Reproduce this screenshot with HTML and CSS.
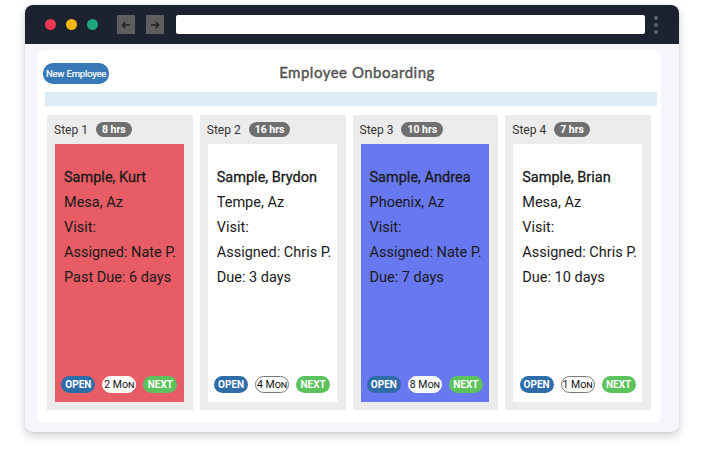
FILE: index.html
```html
<!DOCTYPE html>
<html>
<head>
<meta charset="utf-8">
<link rel="stylesheet" href="styles.css">
</head>
<body>
<div class="window">
  <div class="chrome">
    <div class="dots">
      <span class="dot red"></span>
      <span class="dot yellow"></span>
      <span class="dot green"></span>
    </div>
    <div class="navs">
      <span class="nav"><svg width="12" height="12" viewBox="0 0 12 12"><path d="M10 6H2.5M5.5 2.8L2.3 6l3.2 3.2" fill="none" stroke="#222" stroke-width="1.4"/></svg></span>
      <span class="nav"><svg width="12" height="12" viewBox="0 0 12 12"><path d="M2 6h7.5M6.5 2.8L9.7 6 6.5 9.2" fill="none" stroke="#222" stroke-width="1.4"/></svg></span>
    </div>
    <div class="url"></div>
    <div class="menu"><span></span><span></span><span></span></div>
  </div>
  <div class="body">
    <div class="panel">
      <div class="header">
        <button class="new-btn">New Employee</button>
        <h1 class="title">Employee Onboarding</h1>
        <span></span>
      </div>
      <div class="bar"></div>
      <div class="board">
        <section class="column">
          <div class="step"><span>Step 1</span><span class="hrs">8 hrs</span></div>
          <div class="card card-red">
            <div class="lines">
              <p class="name">Sample, Kurt</p>
              <p>Mesa, Az</p>
              <p>Visit:</p>
              <p>Assigned: Nate P.</p>
              <p>Past Due: 6 days</p>
            </div>
            <div class="actions">
              <span class="pill open">OPEN</span>
              <span class="pill mon">2 Mon</span>
              <span class="pill next">NEXT</span>
            </div>
          </div>
        </section>
        <section class="column">
          <div class="step"><span>Step 2</span><span class="hrs">16 hrs</span></div>
          <div class="card card-white">
            <div class="lines">
              <p class="name">Sample, Brydon</p>
              <p>Tempe, Az</p>
              <p>Visit:</p>
              <p>Assigned: Chris P.</p>
              <p>Due: 3 days</p>
            </div>
            <div class="actions">
              <span class="pill open">OPEN</span>
              <span class="pill mon">4 Mon</span>
              <span class="pill next">NEXT</span>
            </div>
          </div>
        </section>
        <section class="column">
          <div class="step"><span>Step 3</span><span class="hrs">10 hrs</span></div>
          <div class="card card-blue">
            <div class="lines">
              <p class="name">Sample, Andrea</p>
              <p>Phoenix, Az</p>
              <p>Visit:</p>
              <p>Assigned: Nate P.</p>
              <p>Due: 7 days</p>
            </div>
            <div class="actions">
              <span class="pill open">OPEN</span>
              <span class="pill mon">8 Mon</span>
              <span class="pill next">NEXT</span>
            </div>
          </div>
        </section>
        <section class="column">
          <div class="step"><span>Step 4</span><span class="hrs">7 hrs</span></div>
          <div class="card card-white">
            <div class="lines">
              <p class="name">Sample, Brian</p>
              <p>Mesa, Az</p>
              <p>Visit:</p>
              <p>Assigned: Chris P.</p>
              <p>Due: 10 days</p>
            </div>
            <div class="actions">
              <span class="pill open">OPEN</span>
              <span class="pill mon">1 Mon</span>
              <span class="pill next">NEXT</span>
            </div>
          </div>
        </section>
      </div>
    </div>
  </div>
</div>
</body>
</html>
```

FILE: styles.css
```css
* { box-sizing: border-box; }
html, body { margin: 0; padding: 0; background: #ffffff; }
body {
  width: 704px;
  height: 450px;
  overflow: hidden;
  font-family: Roboto, "Liberation Sans", sans-serif;
  padding: 5px 0 0 25px;
}
.window {
  width: 654px;
  height: 427px;
  border-radius: 8px;
  overflow: hidden;
  background: #f4f6fb;
  box-shadow: 0 4px 10px rgba(0,0,0,0.18), 0 0 3px rgba(0,0,0,0.08);
  display: flex;
  flex-direction: column;
}
.chrome {
  height: 39px;
  background: #1d2230;
  display: flex;
  align-items: center;
  padding: 0 21px 0 20px;
  flex-shrink: 0;
}
.dots { display: flex; gap: 10px; }
.dot { width: 11px; height: 11px; border-radius: 50%; display: block; }
.red { background: #e8384f; }
.yellow { background: #f4b90c; }
.green { background: #1ea57a; }
.navs { display: flex; gap: 11px; margin-left: 19px; }
.nav {
  width: 18px; height: 19px;
  background: #5e5e5e;
  display: flex; align-items: center; justify-content: center;
}
.url {
  flex: 1;
  height: 19px;
  background: #ffffff;
  border-radius: 2px;
  margin-left: 12px;
}
.menu {
  display: flex; flex-direction: column; gap: 3px;
  margin-left: 9px;
}
.menu span { width: 4px; height: 4px; border-radius: 50%; background: #5a5f68; display: block; }
.body {
  flex: 1;
  padding: 6px 18px 9px 12px;
}
.panel {
  height: 373px;
  background: #ffffff;
  border-radius: 6px;
  padding: 13px 4px 0 8px;
}
.header {
  display: grid;
  grid-template-columns: 1fr auto 1fr;
  align-items: center;
  height: 21px;
}
.new-btn {
  justify-self: start;
  margin-left: -2px;
  height: 21px;
  width: 66px;
  padding: 0;
  border: none;
  border-radius: 10px;
  background: #3679b6;
  color: #ffffff;
  font-family: Roboto, "Liberation Sans", sans-serif;
  font-size: 9.5px;
  font-weight: 400;
  -webkit-text-stroke: 0.2px #ffffff;
  letter-spacing: -0.2px;
}
.title {
  margin: 0 0 3px 12px;
  font-family: Lato, "Open Sans", sans-serif;
  font-weight: 400;
  font-size: 15px;
  letter-spacing: 0.5px;
  color: #555555;
  -webkit-text-stroke: 0.45px #555555;
}
.bar {
  height: 14px;
  background: #dcebf5;
  margin-top: 8px;
}
.board {
  display: grid;
  grid-template-columns: repeat(4, 1fr);
  gap: 7px;
  margin: 9px 6px 0 2px;
}
.column {
  background: #ececec;
  height: 295px;
  padding: 7px 9px 8px 8px;
  display: flex;
  flex-direction: column;
  gap: 7px;
}
.step {
  display: flex;
  align-items: center;
  gap: 8px;
  height: 15px;
  font-size: 12px;
  color: #333333;
  margin-left: -1px;
}
.hrs {
  background: #6f6f6f;
  color: #ffffff;
  font-size: 10.5px;
  font-weight: 700;
  height: 15px;
  line-height: 15px;
  padding: 0 6px;
  border-radius: 8px;
}
.card {
  flex: 1;
  display: flex;
  flex-direction: column;
  padding: 21px 0 9px 9px;
  color: #1a1a1a;
}
.card-red { background: #e85c65; }
.card-white { background: #ffffff; }
.card-blue { background: #6878f0; }
.lines p {
  margin: 0;
  font-size: 14.5px;
  line-height: 25px;
  white-space: nowrap;
}
.lines .name { -webkit-text-stroke: 0.3px #1a1a1a; }
.actions {
  margin-top: auto;
  margin-left: -9px;
  display: flex;
  justify-content: center;
  gap: 7px;
}
.pill {
  height: 17px;
  width: 34px;
  border-radius: 9px;
  display: flex;
  align-items: center;
  justify-content: center;
  font-size: 10px;
  font-weight: 700;
}
.open { background: #2f6da9; color: #ffffff; }
.next { background: #5cc35c; color: #ffffff; }
.mon {
  background: #ffffff;
  color: #111111;
  font-weight: 400;
  font-variant: small-caps;
  font-size: 10.5px;
  border: 1px solid #ffffff;
}
.card-white .mon { border-color: #777777; }
```
